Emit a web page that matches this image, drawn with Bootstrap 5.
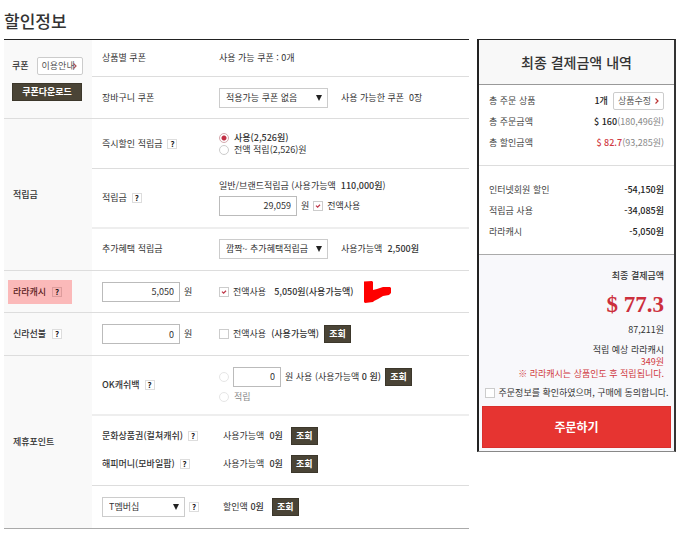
<!DOCTYPE html>
<html lang="ko">
<head>
<meta charset="utf-8">
<meta name="viewport" content="width=device-width, initial-scale=1">
<title>할인정보</title>
<link href="https://cdn.jsdelivr.net/npm/bootstrap@5.3.0/dist/css/bootstrap.min.css" rel="stylesheet">
<style>
body{font-family:"Noto Sans CJK KR","Noto Sans",sans-serif;font-size:9px;line-height:12px;color:#333;background:#fff}
.page{padding:10px 24px 10px 4px}
.page-title{font-size:17px;line-height:22px;font-weight:500;margin:0 0 7px;color:#333}
.checkout{display:grid;grid-template-columns:minmax(0,1fr) 199px;column-gap:8px;align-items:start}
/* benefit table */
.benefits{table-layout:fixed;border-top:1px solid #222;border-bottom:1px solid #aaa;color:#333;margin:0}
.benefits .c-group{width:88px}
.benefits .c-name{width:127px}
.benefits>tbody>tr>*{padding:0;vertical-align:middle;border:0;border-bottom:1px solid #ddd;font-weight:400;color:#333}
.benefits>tbody>tr>.group{background:#f9f9f9;padding-left:4px;font-weight:500}
.benefits>tbody>tr>.name{padding-left:10px}
.benefits>tbody>tr:last-child>*,.benefits>tbody>tr>.group-last{border-bottom:0}
.benefits>tbody>tr>.soft{border-bottom:2px solid #eee}
.r-37{height:37px}.r-42{height:42px}.r-50{height:50px}.r-59{height:59px}.r-43{height:43px}.r-71{height:71px}
.tag{padding:6px 5px;display:inline-flex;align-items:center;gap:6px}
.tag-hot{padding-right:10px;background:#fbb9b9;color:#5a2222}
.tag-hot .help{background:#f9b4b4;border-color:#dd9c9c}
.help{width:10px;height:10px;padding:0;border:1px solid #ddd;background:#fff;color:#222;font-size:8px;line-height:8px;font-weight:700;display:inline-block;text-align:center;flex:none}
.field,.pick{height:20px;border:1px solid #bbb;border-radius:0;background-color:#fff;color:#333;font-size:9px;line-height:12px;padding:0 5px;outline:0}
.field{width:78px;text-align:right}
.field-s{width:48px}
.pick{appearance:none;width:109px;padding:0 16px 0 6px;border-color:#ccc;background-image:url("data:image/svg+xml,%3Csvg xmlns='http://www.w3.org/2000/svg' viewBox='0 0 6 6'%3E%3Cpath d='M0 0h6L3 6z' fill='%23222'/%3E%3C/svg%3E");background-repeat:no-repeat;background-position:right 5px center;background-size:6px 6px}
.pick-s{width:83px}
.tick,.dot{appearance:none;width:10px;height:10px;margin:0;border:1px solid #ccc;background:#fff center/8px 8px no-repeat;flex:none}
.tick:checked{background-image:url("data:image/svg+xml,%3Csvg xmlns='http://www.w3.org/2000/svg' viewBox='0 0 8 8'%3E%3Cpath d='M2 3.6l1.6 1.6L6 2.8' fill='none' stroke='%23c0394b' stroke-width='1.3'/%3E%3C/svg%3E")}
.dot{border-radius:50%}
.dot:checked{background-image:radial-gradient(circle,#c22f45 2px,transparent 3px);border-color:#d5a9ae}
.dot:disabled{border-color:#e6e6e6;opacity:1}
.lookup,.download{background:#4a4436;color:#fff;border:1px solid #3c372b;font-size:9px;line-height:12px;font-weight:700;padding:2px 4px;border-radius:0;width:27px;text-align:center;white-space:nowrap}
.download{width:70px;padding:2px 0;display:block}
.ghost{background:#fff;border:1px solid #ccc;border-radius:2px;color:#555;font-size:9px;line-height:12px;padding:2px 4px;white-space:nowrap;display:inline-flex;align-items:center}
.ghost svg{width:4px;height:6px}
.guide{width:46px}
.guide svg{margin-left:-2px;flex:none}
.gap-c{gap:5px}.gap-m{gap:8px}.gap-l{gap:13px}
.line-28{height:28px}
.indent{padding-left:4px}
.med{font-weight:500}
.scribble{margin-left:3px}
/* payment summary */
.summary{border:2px solid #222;border-top-width:1px;border-right-color:#333;border-bottom:1px solid #888}
.summary h2{font-size:14px;line-height:20px;font-weight:500;margin:0;padding:12px 0;background:#f8f8f8;border-bottom:1px solid #999;text-align:center;color:#333}
.sums{padding:5px 10px 12px;margin:0;border-bottom:1px solid #ddd}
.sums-cut{padding:13px 10px 12px;border-bottom-color:#aaa}
.sums>div{height:21px}
.sums dt{font-weight:400;color:#444}
.sums dd{margin:0;color:#222}
.grey{color:#888}
.red{color:#d0383f}
.total{background:#f8f8fb;padding:15px 3px 3px}
.figures{padding-right:7px}
.grand{font:700 23px/26px "Liberation Serif",serif;color:#cc2f3c;margin:10px 0 6px}
.agree{margin:7px 0}
.order{background:#e63431;color:#fff;border:1px solid #d92f2c;font-size:12px;line-height:18px;font-weight:700;padding:11px 0;width:100%;display:block}
</style>
<script src="https://cdn.jsdelivr.net/npm/bootstrap@5.3.0/dist/js/bootstrap.bundle.min.js"></script>
</head>
<body>
<main class="page">
<h1 class="page-title">할인정보</h1>
<div class="checkout">
<table class="table benefits">
<colgroup><col class="c-group"><col class="c-name"><col></colgroup>
<tbody>
<tr class="r-37">
<th class="group" rowspan="2" scope="rowgroup">
<div class="indent d-flex flex-column align-items-start gap-2">
<div class="d-flex align-items-center gap-m"><span>쿠폰</span><button type="button" class="ghost guide">이용안내<svg viewBox="0 0 4 6"><path d="M.5.5 3 3 .5 5.5" fill="none" stroke="#a55" stroke-width="1.2"/></svg></button></div>
<button type="button" class="download">쿠폰다운로드</button>
</div></th>
<th class="name" scope="row">상품별 쿠폰</th>
<td>사용 가능 쿠폰 : 0개</td>
</tr>
<tr class="r-42">
<th class="name" scope="row"><label for="cart-coupon">장바구니 쿠폰</label></th>
<td><div class="d-flex align-items-center gap-l"><select id="cart-coupon" class="pick"><option>적용가능 쿠폰 없음</option></select><span>사용 가능한 쿠폰 &nbsp;0장</span></div></td>
</tr>
<tr class="r-50">
<th class="group" rowspan="3" scope="rowgroup"><span class="tag">적립금</span></th>
<th class="name" scope="row"><div class="d-flex align-items-center gap-c">즉시할인 적립금<button type="button" class="help" aria-label="즉시할인 적립금 도움말">?</button></div></th>
<td>
<label class="d-flex align-items-center gap-c med"><input type="radio" name="instant" class="dot" checked>사용(2,526원)</label>
<label class="d-flex align-items-center gap-c"><input type="radio" name="instant" class="dot">전액 적립(2,526)원</label>
</td>
</tr>
<tr class="r-59">
<th class="name soft" scope="row"><div class="d-flex align-items-center gap-c">적립금<button type="button" class="help" aria-label="적립금 도움말">?</button></div></th>
<td class="soft">
<label for="points" class="d-block mb-1">일반/브랜드적립금 (사용가능액 &nbsp;<span class="med">110,000원</span>)</label>
<div class="d-flex align-items-center gap-1"><input id="points" class="field" value="29,059"><span>원</span><label class="d-flex align-items-center gap-1"><input type="checkbox" class="tick" checked>전액사용</label></div>
</td>
</tr>
<tr class="r-43">
<th class="name" scope="row"><label for="extra">추가혜택 적립금</label></th>
<td><div class="d-flex align-items-center gap-l"><select id="extra" class="pick"><option>깜짝~ 추가혜택적립금</option></select><span>사용가능액 &nbsp;<span class="med">2,500원</span></span></div></td>
</tr>
<tr class="r-42">
<th class="group" scope="row"><span class="tag tag-hot"><label for="lala">라라캐시</label><button type="button" class="help" aria-label="라라캐시 도움말">?</button></span></th>
<td class="name"><div class="d-flex align-items-center gap-1"><input id="lala" class="field" value="5,050">원</div></td>
<td><div class="d-flex align-items-center gap-m"><label class="d-flex align-items-center gap-1"><input type="checkbox" class="tick" checked>전액사용</label><span class="med">5,050원(사용가능액)</span>
<svg class="scribble" width="27" height="22" viewBox="0 0 27 22" aria-hidden="true"><path d="M0 .5 8 0 9 1v8l4-1 6-2h7l1 1v5l-2 2-6 1-5 3-4 2-1 1-8 1-1-1z" fill="#fe0000"/></svg></div></td>
</tr>
<tr class="r-43">
<th class="group" scope="row"><span class="tag"><label for="gift">신라선불</label><button type="button" class="help" aria-label="신라선불 도움말">?</button></span></th>
<td class="name"><div class="d-flex align-items-center gap-1"><input id="gift" class="field" value="0">원</div></td>
<td><div class="d-flex align-items-center gap-c"><label class="d-flex align-items-center gap-1"><input type="checkbox" class="tick">전액사용</label><span class="med">(사용가능액)</span><button type="button" class="lookup">조회</button></div></td>
</tr>
<tr class="r-59">
<th class="group group-last" rowspan="3" scope="rowgroup"><span class="tag">제휴포인트</span></th>
<th class="name soft" scope="row"><div class="d-flex align-items-center gap-c med">OK캐쉬백<button type="button" class="help" aria-label="OK캐쉬백 도움말">?</button></div></th>
<td class="soft">
<div class="d-flex align-items-center gap-1"><input type="radio" name="okcash" class="dot" disabled aria-label="OK캐쉬백 사용"><input class="field field-s" value="0" aria-label="OK캐쉬백 사용액"><span>원 사용 (사용가능액 <span class="med">0 원)</span></span><button type="button" class="lookup">조회</button></div>
<label class="d-flex align-items-center gap-c grey mt-1"><input type="radio" name="okcash" class="dot" disabled>적립</label>
</td>
</tr>
<tr class="r-71">
<th class="name" scope="row">
<div class="d-flex align-items-center gap-c line-28 med">문화상품권(컬쳐캐쉬)<button type="button" class="help" aria-label="문화상품권 도움말">?</button></div>
<div class="d-flex align-items-center gap-c line-28 med">해피머니(모바일팝)<button type="button" class="help" aria-label="해피머니 도움말">?</button></div>
</th>
<td>
<div class="d-flex align-items-center gap-m line-28 indent"><span>사용가능액 &nbsp;<span class="med">0원</span></span><button type="button" class="lookup">조회</button></div>
<div class="d-flex align-items-center gap-m line-28 indent"><span>사용가능액 &nbsp;<span class="med">0원</span></span><button type="button" class="lookup">조회</button></div>
</td>
</tr>
<tr class="r-43">
<td class="name"><div class="d-flex align-items-center gap-1"><select class="pick pick-s" aria-label="멤버십"><option>T멤버십</option></select><button type="button" class="help" aria-label="멤버십 도움말">?</button></div></td>
<td><div class="d-flex align-items-center gap-m indent"><span>할인액 <span class="med">0원</span></span><button type="button" class="lookup">조회</button></div></td>
</tr>
</tbody>
</table>

<aside class="summary">
<h2>최종 결제금액 내역</h2>
<dl class="sums">
<div class="d-flex align-items-center justify-content-between"><dt>총 주문 상품</dt><dd class="d-flex align-items-center gap-c med">1개 <button type="button" class="ghost gap-1">상품수정<svg viewBox="0 0 4 6"><path d="M.5.5 3 3 .5 5.5" fill="none" stroke="#b33" stroke-width="1.2"/></svg></button></dd></div>
<div class="d-flex align-items-center justify-content-between"><dt>총 주문금액</dt><dd><span class="med">$ 160</span><span class="grey">(180,496원)</span></dd></div>
<div class="d-flex align-items-center justify-content-between"><dt>총 할인금액</dt><dd><span class="red med">$ 82.7</span><span class="grey">(93,285원)</span></dd></div>
</dl>
<dl class="sums sums-cut">
<div class="d-flex align-items-center justify-content-between"><dt>인터넷회원 할인</dt><dd class="med">-54,150원</dd></div>
<div class="d-flex align-items-center justify-content-between"><dt>적립금 사용</dt><dd class="med">-34,085원</dd></div>
<div class="d-flex align-items-center justify-content-between"><dt>라라캐시</dt><dd class="med">-5,050원</dd></div>
</dl>
<div class="total">
<div class="figures text-end">
<div class="med">최종 결제금액</div>
<div class="grand">$ 77.3</div>
<div>87,211원</div>
<div class="mt-2">적립 예상 라라캐시</div>
<div class="red">349원</div>
<div class="red">※ 라라캐시는 상품인도 후 적립됩니다.</div>
</div>
<label class="agree d-flex align-items-center justify-content-center gap-1 text-nowrap"><input type="checkbox" class="tick">주문정보를 확인하였으며, 구매에 동의합니다.</label>
<button type="button" class="order">주문하기</button>
</div>
</aside>
</div>
</main>
</body>
</html>
